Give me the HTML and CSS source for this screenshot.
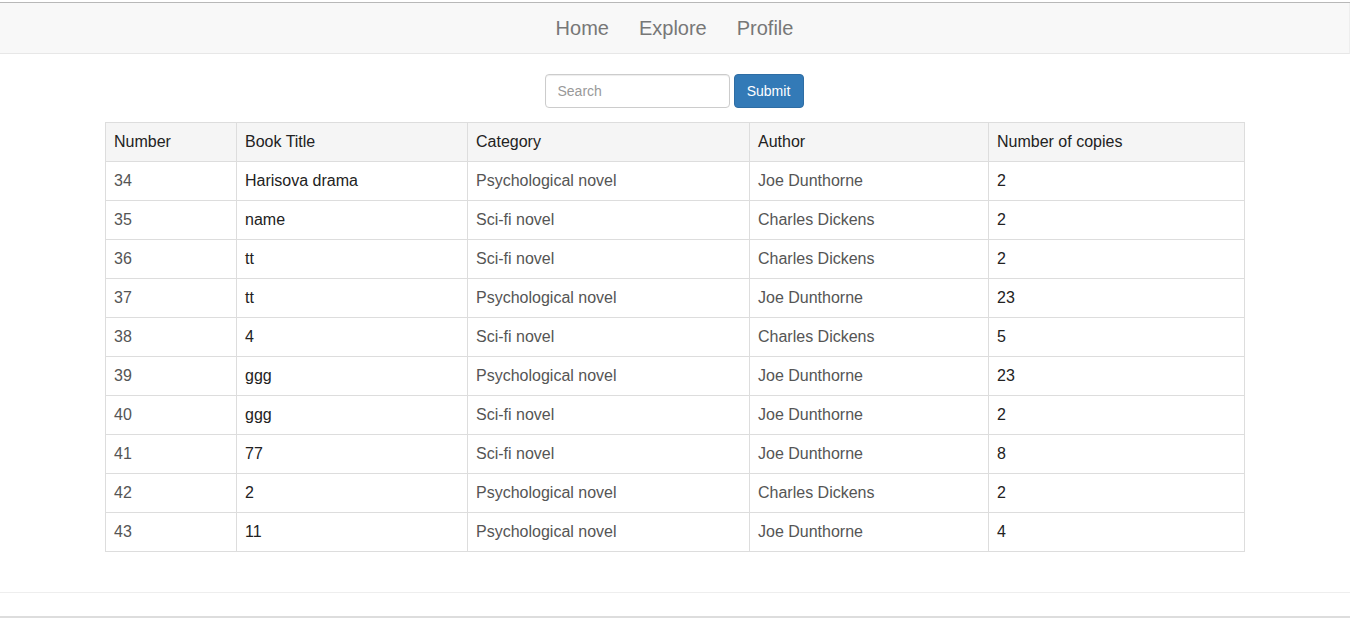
FILE: index.html
```html
<!DOCTYPE html>
<html>
<head>
<meta charset="utf-8">
<link rel="stylesheet" href="styles.css">
</head>
<body>
<div class="topline"></div>
<nav class="navbar">
  <a href="#">Home</a>
  <a href="#">Explore</a>
  <a href="#">Profile</a>
</nav>
<form class="search">
  <input type="text" placeholder="Search">
  <button type="button">Submit</button>
</form>
<table class="books">
  <colgroup>
    <col class="c1"><col class="c2"><col class="c3"><col class="c4"><col class="c5">
  </colgroup>
  <thead>
    <tr><th>Number</th><th>Book Title</th><th>Category</th><th>Author</th><th>Number of copies</th></tr>
  </thead>
  <tbody>
    <tr><td>34</td><td class="dark">Harisova drama</td><td>Psychological novel</td><td>Joe Dunthorne</td><td class="dark">2</td></tr>
    <tr><td>35</td><td class="dark">name</td><td>Sci-fi novel</td><td>Charles Dickens</td><td class="dark">2</td></tr>
    <tr><td>36</td><td class="dark">tt</td><td>Sci-fi novel</td><td>Charles Dickens</td><td class="dark">2</td></tr>
    <tr><td>37</td><td class="dark">tt</td><td>Psychological novel</td><td>Joe Dunthorne</td><td class="dark">23</td></tr>
    <tr><td>38</td><td class="dark">4</td><td>Sci-fi novel</td><td>Charles Dickens</td><td class="dark">5</td></tr>
    <tr><td>39</td><td class="dark">ggg</td><td>Psychological novel</td><td>Joe Dunthorne</td><td class="dark">23</td></tr>
    <tr><td>40</td><td class="dark">ggg</td><td>Sci-fi novel</td><td>Joe Dunthorne</td><td class="dark">2</td></tr>
    <tr><td>41</td><td class="dark">77</td><td>Sci-fi novel</td><td>Joe Dunthorne</td><td class="dark">8</td></tr>
    <tr><td>42</td><td class="dark">2</td><td>Psychological novel</td><td>Charles Dickens</td><td class="dark">2</td></tr>
    <tr><td>43</td><td class="dark">11</td><td>Psychological novel</td><td>Joe Dunthorne</td><td class="dark">4</td></tr>
  </tbody>
</table>
<footer class="footer"></footer>
</body>
</html>
```
FILE: styles.css
```css
* { box-sizing: border-box; }
html, body { margin: 0; padding: 0; background: #fff; }
body {
  font-family: "Liberation Sans", Arial, sans-serif;
  font-size: 16px;
  color: #333;
}
.topline {
  height: 3px;
  border-top: 2px solid #fff;
  border-bottom: 1px solid #b8b8b8;
}
.navbar {
  height: 51px;
  background: #f8f8f8;
  border-bottom: 1px solid #e7e7e7;
  border-right: 1px solid #eee;
  display: flex;
  justify-content: center;
  align-items: center;
  gap: 30px;
}
.navbar a {
  color: #777;
  text-decoration: none;
  font-size: 20px;
  line-height: 24px;
}
.search {
  display: flex;
  justify-content: center;
  gap: 4px;
  margin: 20px 0 14px;
  padding-right: 2px;
}
.search input {
  width: 185px;
  height: 34px;
  border: 1px solid #ccc;
  border-radius: 4px;
  padding: 6px 12px;
  font-family: "Liberation Sans", Arial, sans-serif;
  font-size: 14px;
  color: #555;
  box-shadow: inset 0 1px 1px rgba(0,0,0,.075);
}
.search input::placeholder { color: #999; }
.search button {
  width: 70px;
  height: 34px;
  background: #337ab7;
  border: 1px solid #2e6da4;
  border-radius: 4px;
  color: #fff;
  font-family: "Liberation Sans", Arial, sans-serif;
  font-size: 14px;
  padding: 0;
}
.books {
  width: 1140px;
  margin: 0 auto;
  border-collapse: collapse;
  table-layout: fixed;
  border: 1px solid #ddd;
}
.c1 { width: 131px; }
.c2 { width: 231px; }
.c3 { width: 282px; }
.c4 { width: 239px; }
.c5 { width: 256px; }
.books th, .books td {
  border: 1px solid #ddd;
  padding: 8px;
  line-height: 22px;
  text-align: left;
  font-size: 16px;
  white-space: nowrap;
}
.books th {
  background: #f5f5f5;
  font-weight: normal;
  color: #222;
}
.books td { color: #555; }
.books td.dark { color: #222; }
.footer {
  margin-top: 40px;
  height: 26px;
  border-top: 1px solid #eee;
  border-bottom: 2px solid #ddd;
}
```
